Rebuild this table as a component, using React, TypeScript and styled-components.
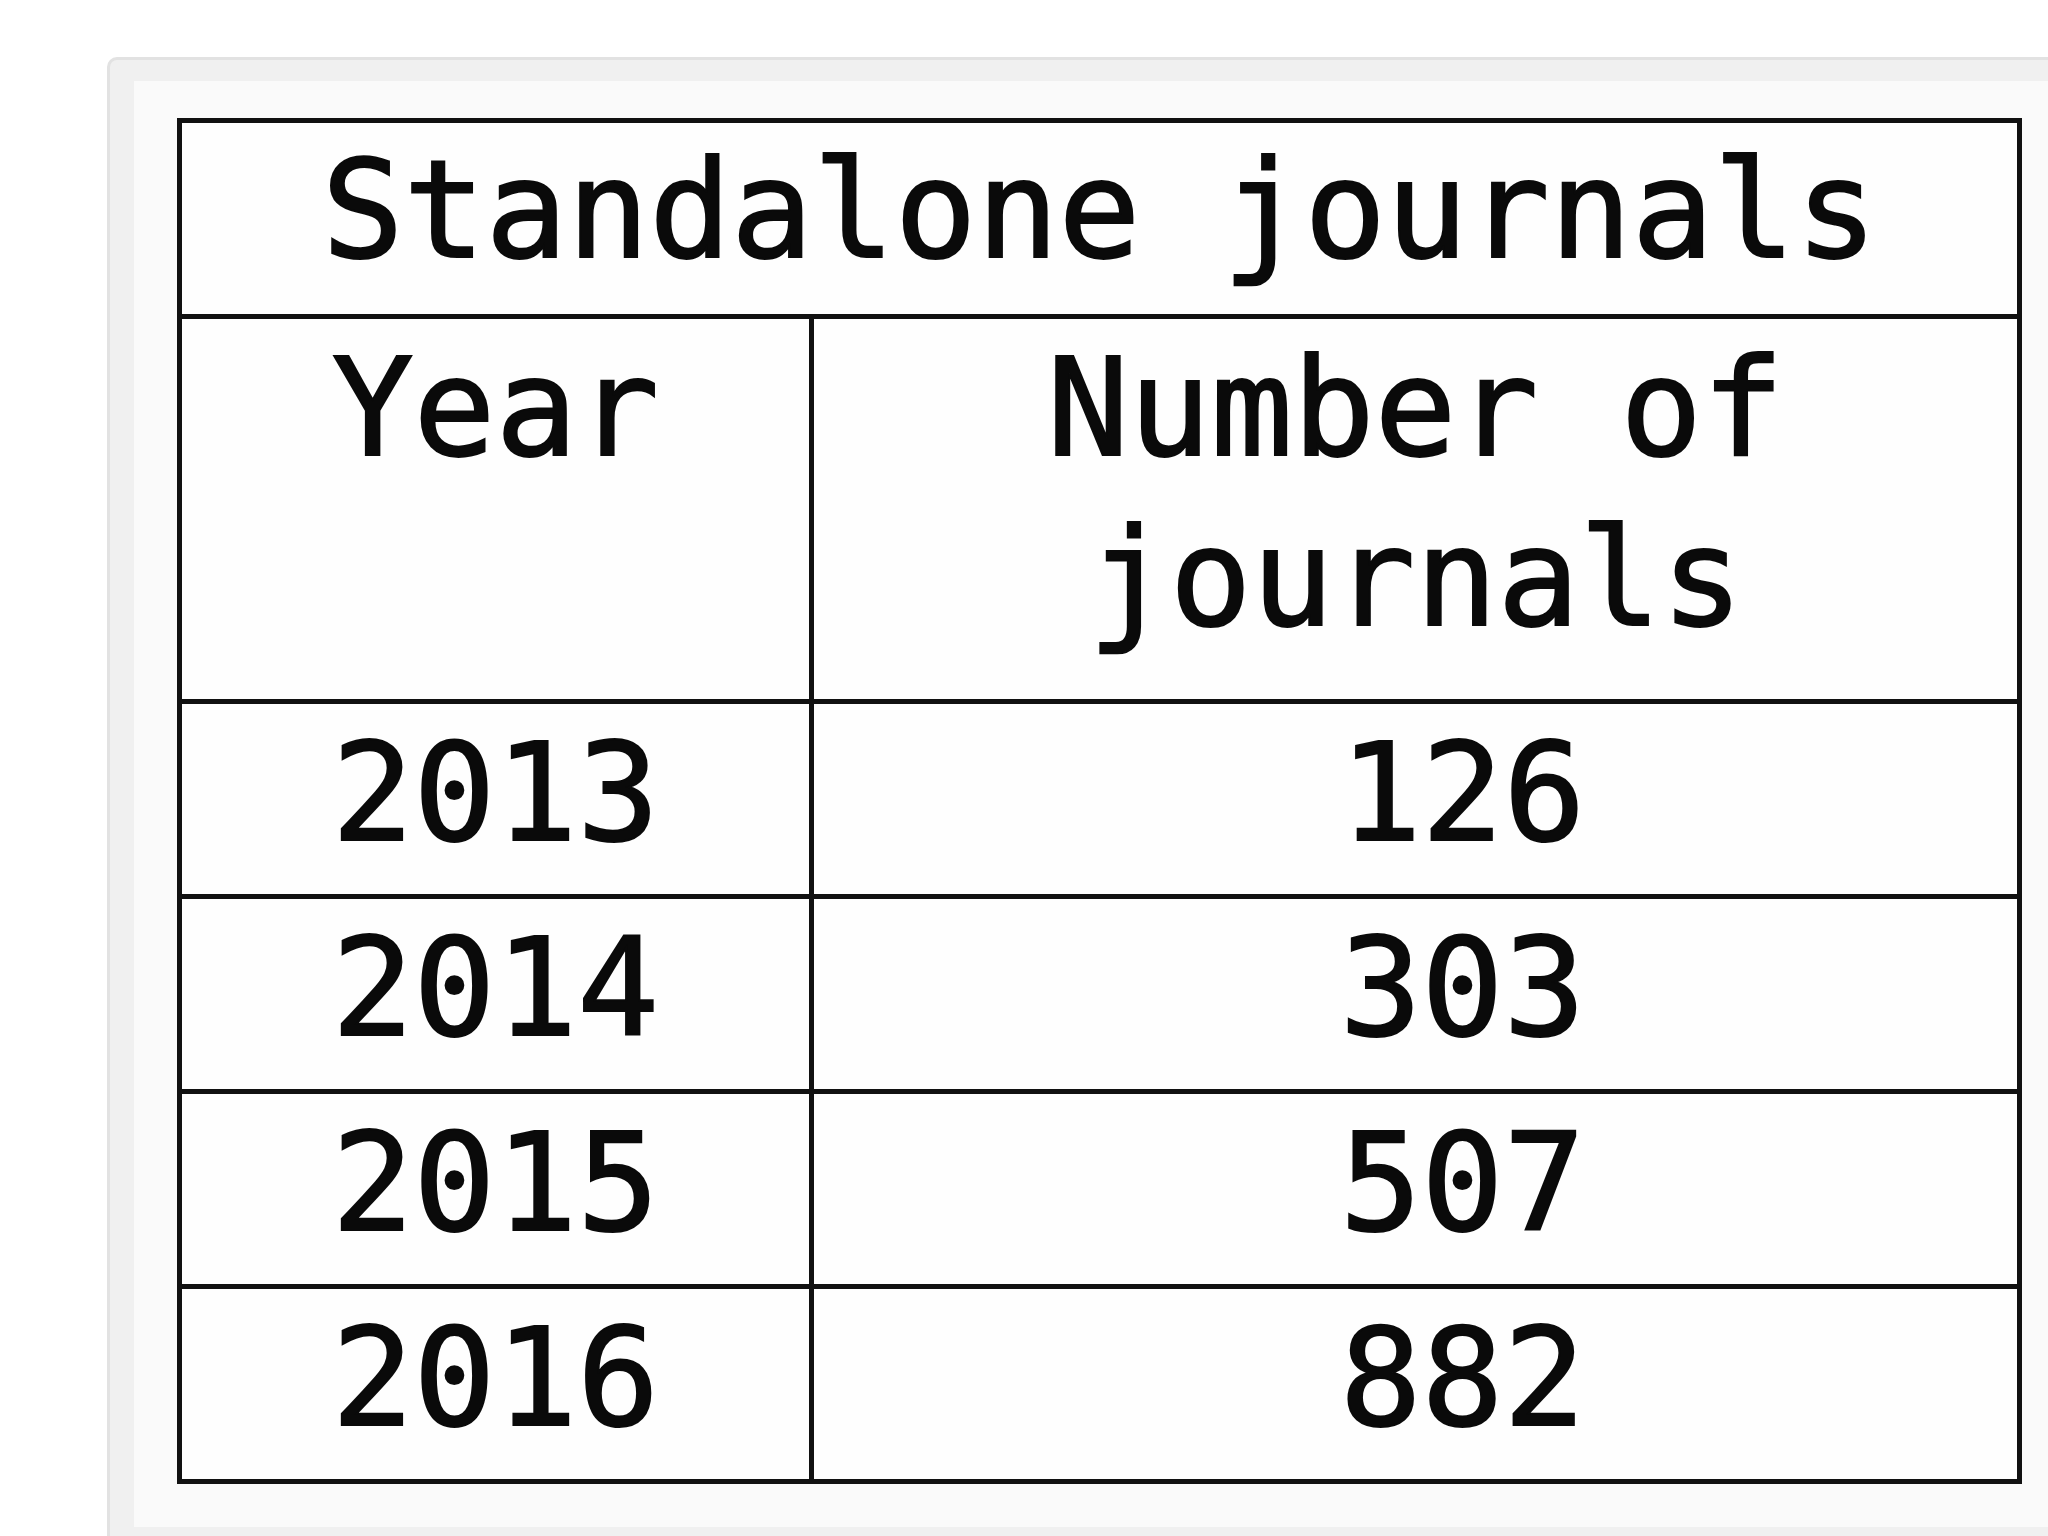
import React from "react";
import styled, { createGlobalStyle } from "styled-components";

type JournalRow = {
  year: string;
  count: string;
};

const rows: JournalRow[] = [
  { year: "2013", count: "126" },
  { year: "2014", count: "303" },
  { year: "2015", count: "507" },
  { year: "2016", count: "882" },
];

export default function App() {
  return (
    <>
      <GlobalStyle />
      <StFrame>
        <StSheet>
          <StTable>
            <colgroup>
              <col style={{ width: "632px" }} />
              <col />
            </colgroup>
            <thead>
              <tr>
                <StTitle colSpan={2}>Standalone journals</StTitle>
              </tr>
              <tr>
                <StHead>Year</StHead>
                <StHead>Number of journals</StHead>
              </tr>
            </thead>
            <tbody>
              {rows.map((row) => (
                <tr key={row.year}>
                  <StCell>{row.year}</StCell>
                  <StCell $shift>{row.count}</StCell>
                </tr>
              ))}
            </tbody>
          </StTable>
        </StSheet>
      </StFrame>
    </>
  );
}

const GlobalStyle = createGlobalStyle`
  html, body {
    margin: 0;
    padding: 0;
    background: #ffffff;
    width: 2048px;
    height: 1536px;
    overflow: hidden;
  }
`;

const StFrame = styled.section`
  margin: 57px 0 0 107px;
  width: 2000px;
  padding: 21px 0 40px 24px;
  background: #f0f0f0;
  border: 3px solid #e2e2e2;
  border-right: none;
  border-bottom: none;
  border-top-left-radius: 10px;
`;

const StSheet = styled.div`
  background: #fafafa;
  padding: 37px 0 43px 43px;
`;

const StTable = styled.table`
  width: 1845px;
  table-layout: fixed;
  border-collapse: separate;
  border-spacing: 0;
  border-top: 5px solid #111111;
  border-left: 5px solid #111111;
  background: #fefefe;
  font-family: "DejaVu Sans Mono", "Liberation Mono", monospace;
  font-size: 136px;
  line-height: 170px;
  color: #0a0a0a;
  -webkit-text-stroke: 2px #0a0a0a;
`;

const StBaseCell = styled.td`
  border-right: 5px solid #111111;
  border-bottom: 5px solid #111111;
  text-align: center;
  vertical-align: top;
  font-weight: normal;
  white-space: normal;
`;

const StTitle = styled(StBaseCell).attrs({ as: "th" })`
  padding: 2px 0 19px;
`;

const StHead = styled(StBaseCell).attrs({ as: "th" })`
  padding: 4px 0 36px;
`;

const StCell = styled(StBaseCell)<{ $shift?: boolean }>`
  padding: 4px 0 16px ${(p) => (p.$shift ? "94px" : "0")};
`;
